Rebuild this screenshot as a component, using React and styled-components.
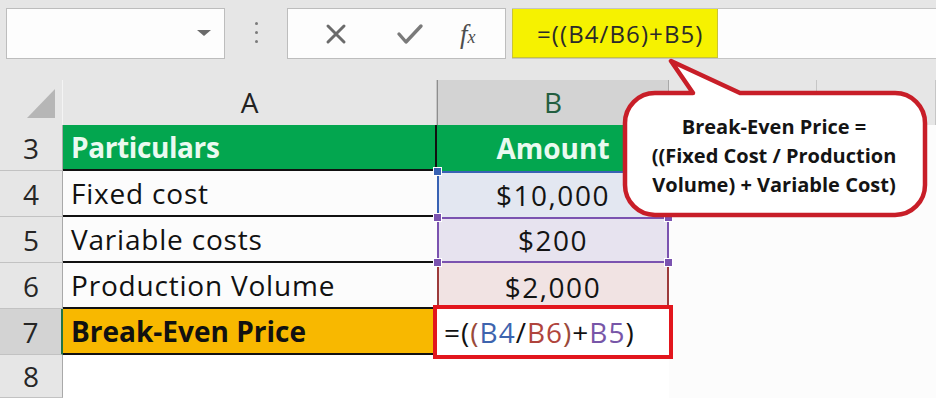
import React from "react";
import styled, { createGlobalStyle, css } from "styled-components";

const Global = createGlobalStyle`
  html, body { margin: 0; padding: 0; background: #ffffff; }
  #root { width: 936px; height: 398px; }
  * { box-sizing: border-box; }
`;

const FONT = `"Open Sans", "Noto Sans", sans-serif`;

const Root = styled.div`
  position: relative;
  width: 936px;
  height: 398px;
  overflow: hidden;
  font-family: ${FONT};
  background: #fcfcfc;
`;

/* ---------- toolbar ---------- */
const Toolbar = styled.div`
  display: flex;
  align-items: flex-start;
  height: 80px;
  padding: 8px 0 0 6px;
  background: #e6e6e6;
`;

const NameBox = styled.div`
  position: relative;
  width: 219px;
  height: 51px;
  background: #fdfdfd;
  border: 1px solid #bdbdbd;
  display: flex;
  align-items: center;
  justify-content: flex-end;
  padding-right: 13px;
`;

const Caret = styled.span`
  width: 0;
  height: 0;
  border-left: 7px solid transparent;
  border-right: 7px solid transparent;
  border-top: 6px solid #6a6a6a;
  margin-top: -2px;
`;

const Grip = styled.div`
  width: 62px;
  height: 51px;
  display: flex;
  flex-direction: column;
  align-items: center;
  justify-content: center;
  gap: 6px;
  padding-bottom: 2px;
`;

const GripDot = styled.span`
  width: 3px;
  height: 3px;
  border-radius: 50%;
  background: #7a7a7a;
`;

const FxButtons = styled.div`
  width: 219px;
  height: 51px;
  background: #fdfdfd;
  border: 1px solid #bdbdbd;
  display: flex;
  align-items: center;
  padding-left: 24px;
  gap: 26px;
  margin-right: 6px;
`;

const IconSlot = styled.span`
  width: 48px;
  height: 26px;
  display: flex;
  align-items: center;
  justify-content: center;
`;

const FxLabel = styled.span`
  font-family: "Liberation Serif", "DejaVu Serif", serif;
  font-style: italic;
  color: #4e4e4e;
  font-size: 27px;
  line-height: 1;
  margin-left: 0px;
  margin-top: 2px;
  & > small {
    font-size: 18px;
    margin-left: 0px;
  }
`;

const FormulaBar = styled.div`
  flex: 1;
  height: 51px;
  background: #fdfdfd;
  border-top: 1px solid #c4c4c4;
  border-bottom: 1px solid #c4c4c4;
  display: flex;
`;

const FormulaHighlight = styled.div`
  width: 206px;
  height: 100%;
  background: #f6f200;
  border: 1px solid #c9c436;
  border-top: none;
  display: flex;
  align-items: center;
  padding-left: 24px;
  font-size: 24px;
  letter-spacing: 1.1px;
  color: #2a2a2a;
`;

/* ---------- sheet ---------- */
const Sheet = styled.div`
  display: grid;
  grid-template-columns: 63px 374px 232px 148px 1fr;
  grid-template-rows: 45px repeat(5, 46px) 1fr;
  height: 318px;
`;

const Corner = styled.div`
  background: #e6e6e6;
  border-right: 1px solid #f4f4f4;
  display: flex;
  align-items: flex-end;
  justify-content: flex-end;
  padding: 0 7px 7px 0;
`;

const CornerTriangle = styled.span`
  width: 0;
  height: 0;
  border-left: 28px solid transparent;
  border-bottom: 29px solid #b6b6b6;
`;

const ColHeader = styled.div`
  background: ${(p) => (p.$active ? "#d3d3d3" : "#e6e6e6")};
  border-right: 1px solid ${(p) => (p.$active ? "#a8a8a8" : "#c6c6c6")};
  border-left: ${(p) => (p.$active ? "1px solid #8e8e8e" : "none")};
  color: ${(p) => (p.$active ? "#235e40" : "#222")};
  font-size: 28px;
  display: flex;
  align-items: center;
  justify-content: center;
  padding-bottom: 2px;
`;

const RowHeader = styled.div`
  background: ${(p) => (p.$active ? "#d3d3d3" : "#e6e6e6")};
  border-bottom: 1px solid #c2c2c2;
  border-right: ${(p) => (p.$active ? "2px solid #217346" : "1px solid #a9a9a9")};
  color: #262626;
  font-size: 28px;
  display: flex;
  align-items: center;
  justify-content: center;
`;

const LabelCell = styled.div`
  display: flex;
  align-items: center;
  padding-left: 8px;
  font-size: 28px;
  color: #111;
  letter-spacing: 0.8px;
  border-bottom: ${(p) => (p.$last ? "none" : "2px solid #111")};
  ${(p) =>
    p.$variant === "header" &&
    css`
      background: #03a64f;
      color: #eafaf0;
      font-weight: 700;
      letter-spacing: -0.4px;
      border-right: 2px solid #111;
    `}
  ${(p) =>
    p.$variant === "total" &&
    css`
      background: #f8b800;
      font-weight: 700;
      letter-spacing: 0;
    `}
`;

const tones = {
  blue: { line: "#3862b4", bg: "#e3e7f1" },
  purple: { line: "#7b53b0", bg: "#e7e3ef" },
  red: { line: "#9c3a3a", bg: "#f1e3e3" },
};

const ValueCell = styled.div`
  position: relative;
  display: flex;
  align-items: center;
  justify-content: center;
  font-size: 28px;
  letter-spacing: 1.5px;
  color: #141414;
  background: ${(p) => tones[p.$tone].bg};
  border-left: 2px solid ${(p) => tones[p.$tone].line};
  border-right: 2px solid ${(p) => tones[p.$tone].line};
  border-top: ${(p) => (p.$top ? `2px solid ${tones[p.$tone].line}` : "none")};
  border-bottom: ${(p) => (p.$bottom ? `2px solid ${tones[p.$tone].line}` : "none")};
  padding-top: ${(p) => (p.$top ? "0" : "2px")};
`;

const AmountHeader = styled.div`
  background: #03a64f;
  color: #eafaf0;
  font-weight: 700;
  font-size: 28px;
  display: flex;
  align-items: center;
  justify-content: center;
`;

const Handle = styled.span`
  position: absolute;
  width: 9px;
  height: 9px;
  background: ${(p) => p.$color};
  border: 1px solid #ffffff;
  z-index: 2;
  ${(p) => (p.$pos.includes("t") ? "top: -6px;" : "bottom: -6px;")}
  ${(p) => (p.$pos.includes("l") ? "left: -6px;" : "right: -6px;")}
`;

const FormulaCell = styled.div`
  position: relative;
  z-index: 3;
  background: #ffffff;
  outline: 4px solid #e2161d;
  display: flex;
  align-items: center;
  padding-left: 7px;
  font-size: 28px;
  letter-spacing: 1px;
  color: #111;
`;

const Ref = styled.span`
  color: ${(p) => p.$c};
`;

const Blank = styled.div`
  background: ${(p) => p.$bg || "#fcfcfc"};
`;

/* ---------- callout ---------- */
const Callout = styled.div`
  position: absolute;
  left: 618px;
  top: 56px;
  width: 312px;
  height: 164px;
  z-index: 5;
  display: flex;
  flex-direction: column;
  align-items: center;
  padding-top: 56px;
  font-family: ${FONT};
  font-weight: 700;
  font-size: 20px;
  line-height: 29px;
  color: #141414;
`;

const CalloutShape = styled.svg`
  position: absolute;
  inset: 0;
  z-index: -1;
`;

const CalloutLine = styled.span`
  white-space: nowrap;
`;

export default function App() {
  return (
    <>
      <Global />
      <Root>
        <Toolbar>
          <NameBox>
            <Caret />
          </NameBox>
          <Grip>
            <GripDot />
            <GripDot />
            <GripDot />
          </Grip>
          <FxButtons>
            <IconSlot>
              <svg width="24" height="24" viewBox="0 0 24 24">
                <path d="M4 4 L20 20 M20 4 L4 20" stroke="#6b6b6b" strokeWidth="3" strokeLinecap="round" />
              </svg>
            </IconSlot>
            <IconSlot>
              <svg width="28" height="24" viewBox="0 0 28 24">
                <path d="M3 12 L10 20 L25 4" stroke="#7a7a7a" strokeWidth="3.4" fill="none" strokeLinecap="round" strokeLinejoin="round" />
              </svg>
            </IconSlot>
            <FxLabel>
              f<small>x</small>
            </FxLabel>
          </FxButtons>
          <FormulaBar>
            <FormulaHighlight>=((B4/B6)+B5)</FormulaHighlight>
          </FormulaBar>
        </Toolbar>

        <Sheet>
          <Corner>
            <CornerTriangle />
          </Corner>
          <ColHeader>A</ColHeader>
          <ColHeader $active>B</ColHeader>
          <ColHeader>C</ColHeader>
          <ColHeader>D</ColHeader>

          <RowHeader>3</RowHeader>
          <LabelCell $variant="header">Particulars</LabelCell>
          <AmountHeader>Amount</AmountHeader>
          <Blank />
          <Blank />

          <RowHeader>4</RowHeader>
          <LabelCell>Fixed cost</LabelCell>
          <ValueCell $tone="blue" $top>
            <Handle $pos="tl" $color="#3862b4" />
            <Handle $pos="tr" $color="#3862b4" />
            $10,000
          </ValueCell>
          <Blank />
          <Blank />

          <RowHeader>5</RowHeader>
          <LabelCell>Variable costs</LabelCell>
          <ValueCell $tone="purple" $top $bottom>
            <Handle $pos="tl" $color="#7b53b0" />
            <Handle $pos="tr" $color="#7b53b0" />
            <Handle $pos="bl" $color="#7b53b0" />
            <Handle $pos="br" $color="#7b53b0" />
            $200
          </ValueCell>
          <Blank />
          <Blank />

          <RowHeader>6</RowHeader>
          <LabelCell>Production Volume</LabelCell>
          <ValueCell $tone="red">$2,000</ValueCell>
          <Blank />
          <Blank />

          <RowHeader $active>7</RowHeader>
          <LabelCell $variant="total">Break-Even Price</LabelCell>
          <FormulaCell>
            =(<Ref $c="#9a4a3a">(</Ref>
            <Ref $c="#3d64ae">B4</Ref>/<Ref $c="#b0443c">B6</Ref>
            <Ref $c="#9a4a3a">)</Ref>+<Ref $c="#7756a8">B5</Ref>)
          </FormulaCell>
          <Blank />
          <Blank />

          <RowHeader>8</RowHeader>
          <Blank $bg="#ffffff" />
          <Blank $bg="#ffffff" />
          <Blank />
          <Blank />
        </Sheet>

        <Callout>
          <CalloutShape width="312" height="164" viewBox="0 0 312 164">
            <path
              d="M37 37 L75 37 L53 5 L122 37 L277 37 A30 30 0 0 1 307 67 L307 129 A30 30 0 0 1 277 159 L37 159 A30 30 0 0 1 7 129 L7 67 A30 30 0 0 1 37 37 Z"
              fill="#ffffff"
              stroke="#c81e28"
              strokeWidth="4.5"
              strokeLinejoin="round"
            />
          </CalloutShape>
          <CalloutLine>Break-Even Price =</CalloutLine>
          <CalloutLine>((Fixed Cost / Production</CalloutLine>
          <CalloutLine>Volume) + Variable Cost)</CalloutLine>
        </Callout>
      </Root>
    </>
  );
}
